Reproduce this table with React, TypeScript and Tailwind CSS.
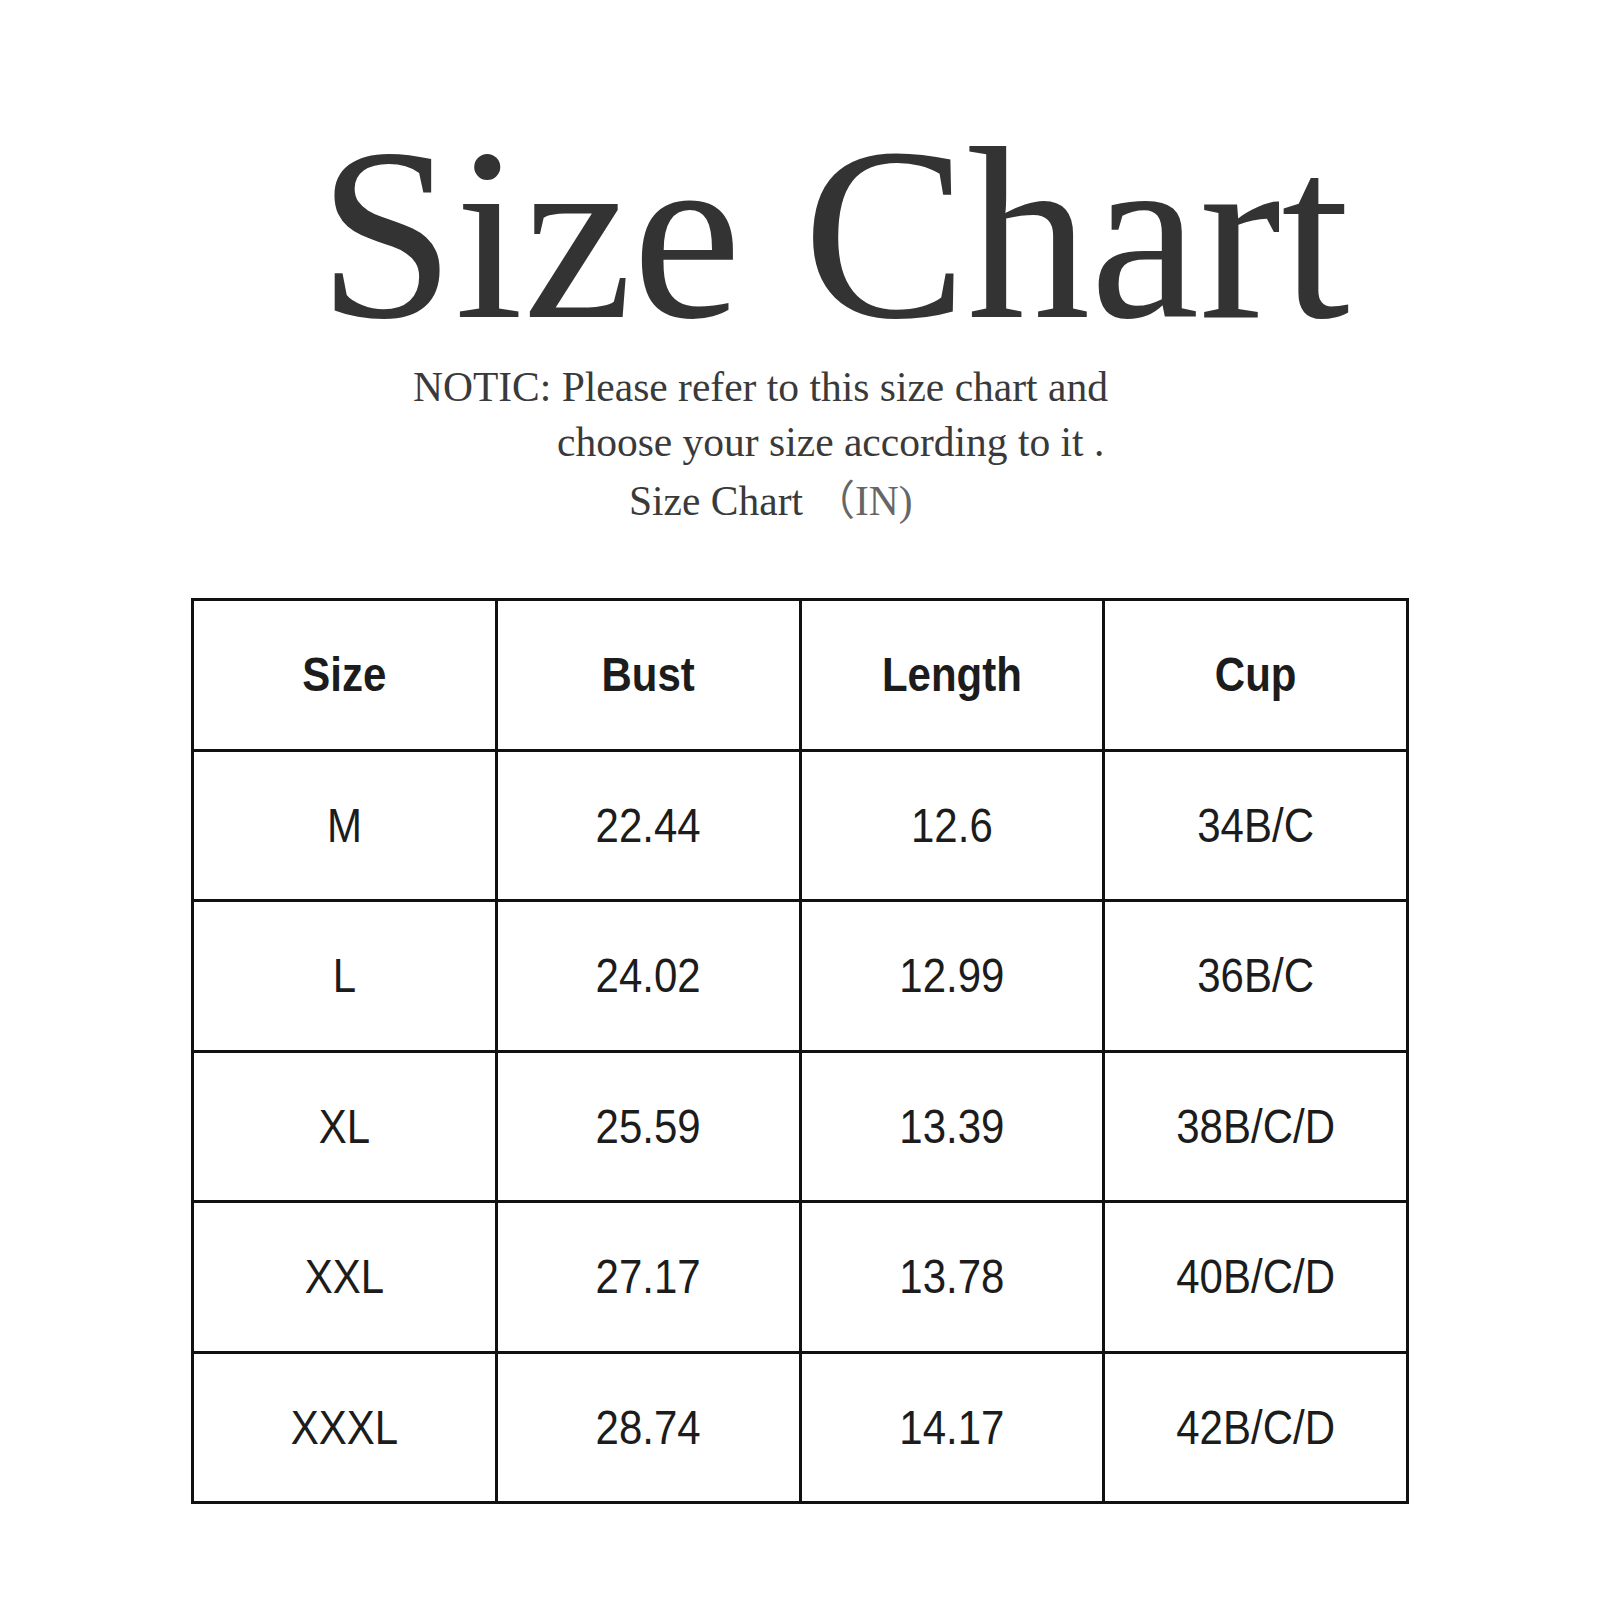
const rows = [
    ['M', '22.44', '12.6', '34B/C'],
    ['L', '24.02', '12.99', '36B/C'],
    ['XL', '25.59', '13.39', '38B/C/D'],
    ['XXL', '27.17', '13.78', '40B/C/D'],
    ['XXXL', '28.74', '14.17', '42B/C/D'],
]

const headers = ['Size', 'Bust', 'Length', 'Cup']

function Cell({ text, bold }: { text: string; bold?: boolean }) {
    return (
        <div className="h-[150.5px] flex items-center justify-center border-r-[3px] border-b-[3px] border-[#111]">
            <span
                className={`text-[42px] leading-none text-[#1c1c1c] scale-y-[1.14] ${bold ? 'font-bold' : 'font-normal'}`}
                style={{ fontFamily: '"Liberation Sans", Arial, sans-serif' }}
            >
                {text}
            </span>
        </div>
    )
}

export default function App() {
    return (
        <div className="w-[1600px] h-[1600px] bg-white flex flex-col">
            <div
                className="pl-[318px] pt-[124px] text-[246px] leading-[0.9] text-[#333]"
                style={{ fontFamily: '"Liberation Serif", "Times New Roman", serif' }}
            >
                Size Chart
            </div>

            <div
                className="mt-[15px] flex flex-col text-[41.5px] leading-[55px] text-[#3a3a3a]"
                style={{ fontFamily: '"Liberation Serif", "Noto Sans CJK SC", serif' }}
            >
                <p className="pl-[413px]">NOTIC: Please refer to this size chart and</p>
                <p className="pl-[557px]">choose your size according to it .</p>
                <p className="pl-[629px] mt-[4px]">
                    Size Chart <span className="text-[#666]">（IN)</span>
                </p>
            </div>

            <div className="mt-[69px] mx-auto w-[1218px] grid grid-cols-4 border-l-[3px] border-t-[3px] border-[#111]">
                {headers.map((h) => (
                    <Cell key={h} text={h} bold />
                ))}
                {rows.map((r) =>
                    r.map((v, i) => <Cell key={r[0] + i} text={v} />)
                )}
            </div>
        </div>
    )
}
